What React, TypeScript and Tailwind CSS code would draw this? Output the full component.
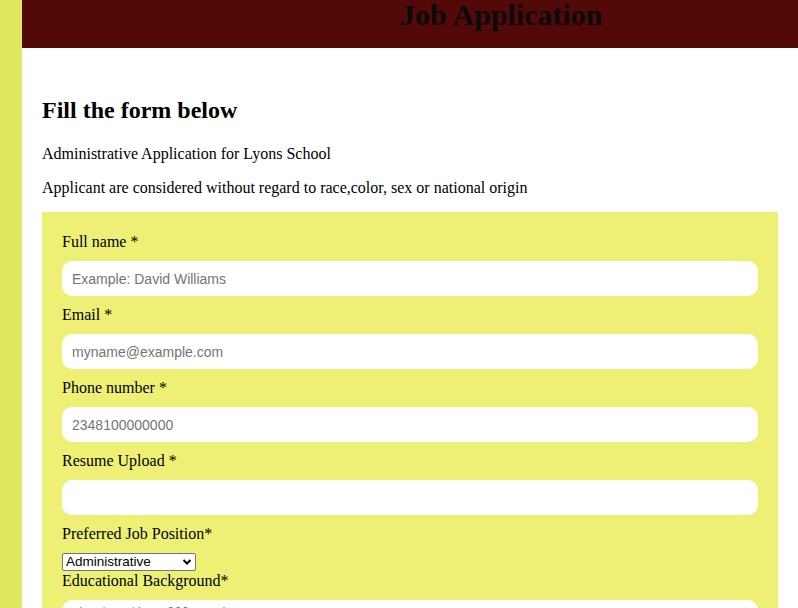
export default function App() {
  return (
    <div className="flex min-h-screen bg-[#dfe85f] font-['Liberation_Serif',serif] text-black">
      <div className="w-[22px] shrink-0" />
      <div className="flex-1 bg-white">
        <header className="h-[48px] bg-[#540909] pl-[378px]">
          <h1 className="text-[30px] font-bold leading-[30px] text-[#0a0a0a]">Job Application</h1>
        </header>
        <main className="px-[20px] pt-[49px]">
          <h2 className="text-[24px] font-bold leading-[27.6px]">Fill the form below</h2>
          <p className="mt-[20px] text-[16px] leading-[18.4px]">Administrative Application for Lyons School</p>
          <p className="mt-[16px] text-[16px] leading-[18.4px]">
            Applicant are considered without regard to race,color, sex or national origin
          </p>
          <form className="mt-[15px] bg-[#eef075] px-[20px] pt-[20px] pb-[24px] text-[16px]">
            <Field label="Full name *" placeholder="Example: David Williams" />
            <Field label="Email *" placeholder="myname@example.com" />
            <Field label="Phone number *" placeholder="2348100000000" />
            <Field label="Resume Upload *" placeholder="" />
            <label className="block leading-[19px] mb-[10px]">Preferred Job Position*</label>
            <div className="relative w-[134px] h-[18px]">
              <select className="block w-full h-full appearance-none border border-[#767676] rounded-[2px] bg-white pl-[3px] text-[13.5px] leading-[16px] font-['Liberation_Sans',Arial,sans-serif] text-black">
                <option>Administrative</option>
                <option>Teaching</option>
                <option>Support Staff</option>
              </select>
              <svg className="absolute right-[4px] top-[4px] pointer-events-none" width="10" height="10" viewBox="0 0 10 10">
                <path d="M1.5 3 L5 6.5 L8.5 3" fill="none" stroke="#000" strokeWidth="2" />
              </svg>
            </div>
            <label className="block leading-[19px] mb-[10px]">Educational Background*</label>
            <textarea
              className="block w-full h-[90px] rounded-[10px] bg-white px-[10px] py-[4px] text-[12.2px] font-['Liberation_Mono',monospace] placeholder:text-[#757575] outline-none resize-none"
              placeholder="shorter than 200 words"
            />
            <button
              type="button"
              className="mt-[16px] rounded-[10px] bg-[#540909] px-[20px] py-[8px] text-white"
            >
              Submit
            </button>
          </form>
        </main>
      </div>
    </div>
  );
}

function Field({ label, placeholder }: { label: string; placeholder: string }) {
  return (
    <div className="mb-[9px]">
      <label className="block leading-[19px] mb-[10px]">{label}</label>
      <input
        className="block w-full h-[35px] rounded-[10px] bg-white px-[10px] text-[14px] font-['Liberation_Sans',Arial,sans-serif] placeholder:text-[#757575] outline-none"
        placeholder={placeholder}
      />
    </div>
  );
}
